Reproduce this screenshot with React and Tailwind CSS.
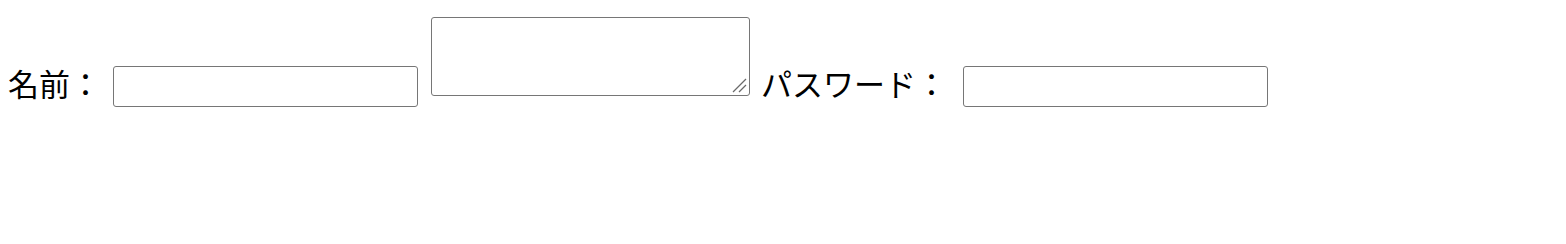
export default function App() {
  const font = { fontFamily: '"Noto Sans CJK JP", "Noto Sans", sans-serif' };
  return (
    <div className="flex items-start pl-[8px] h-[244px] bg-white text-black" style={font}>
      <span className="mt-[67px] w-[105px] shrink-0 text-[31px] leading-[31px] whitespace-nowrap">名前：</span>
      <div className="mt-[66px] w-[305px] h-[41px] shrink-0 border border-[#767676] rounded-[3px] bg-white"></div>
      <div className="relative ml-[13px] mt-[17px] w-[319px] h-[79px] shrink-0 border border-[#767676] rounded-[3px] bg-white">
        <svg className="absolute right-[1px] bottom-[1px]" width="16" height="16" viewBox="0 0 16 16">
          <line x1="1" y1="14" x2="14" y2="1" stroke="#6a6a6a" strokeWidth="1.3" />
          <line x1="7" y1="14" x2="14" y2="7" stroke="#6a6a6a" strokeWidth="1.3" />
        </svg>
      </div>
      <span className="mt-[67px] ml-[11px] w-[202px] shrink-0 text-[31px] leading-[31px] whitespace-nowrap">パスワード：</span>
      <div className="mt-[66px] w-[305px] h-[41px] shrink-0 border border-[#767676] rounded-[3px] bg-white"></div>
    </div>
  );
}
